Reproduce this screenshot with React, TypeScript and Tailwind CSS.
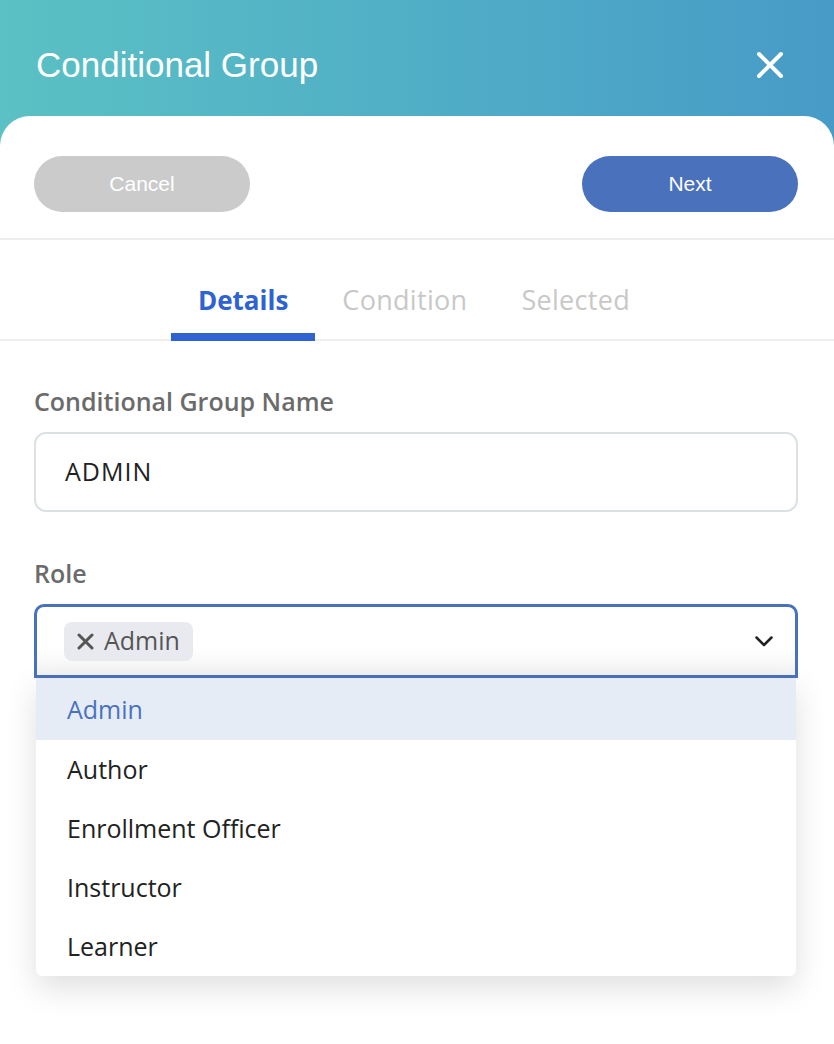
import React from 'react';

const ROLES = ['Admin', 'Author', 'Enrollment Officer', 'Instructor', 'Learner'];

export default function App() {
  const tabs = ['Details', 'Condition', 'Selected'];
  const activeTab = 'Details';

  return (
    <div className="w-[834px] h-[1044px] flex flex-col bg-gradient-to-r from-[#5bc1c4] to-[#479bc7] overflow-hidden">
      {/* Header */}
      <header className="h-[116px] shrink-0 flex items-center justify-between pl-[36px] pr-[50px] pt-[13px]">
        <h1 className="text-white text-[35px] font-['Liberation_Sans',sans-serif] leading-none">Conditional Group</h1>
        <svg width="28" height="28" viewBox="0 0 28 28" fill="none" stroke="white" strokeWidth="4" strokeLinecap="round">
          <path d="M3 3 L25 25 M25 3 L3 25" />
        </svg>
      </header>

      {/* Card */}
      <div className="flex-1 bg-white rounded-t-[30px] flex flex-col font-['Open_Sans',sans-serif]">
        {/* Actions */}
        <div className="flex justify-between pl-[34px] pr-[36px] pt-[40px] pb-[26px] border-b-2 border-[#eeeeee]">
          <button className="w-[216px] h-[56px] rounded-full bg-[#cbcbcb] text-white text-[21px] font-['Liberation_Sans',sans-serif]">
            Cancel
          </button>
          <button className="w-[216px] h-[56px] rounded-full bg-[#4a72bc] text-white text-[21px] font-['Liberation_Sans',sans-serif]">
            Next
          </button>
        </div>

        {/* Tabs */}
        <nav className="flex justify-center border-b-2 border-[#eeeeee] pr-[6px]">
          {tabs.map((tab) => {
            const isActive = tab === activeTab;
            return (
              <div key={tab} className="relative px-[27px] pt-[45px] pb-[24px]">
                <span
                  className={`block leading-[30px] ${isActive ? 'text-[26px] text-[#2e63d1] font-bold' : 'text-[27px] text-[#c8c8c8] font-normal tracking-[0.3px]'}`}
                >
                  {tab}
                </span>
                {isActive && <span className="absolute left-0 right-0 -bottom-[2px] h-[8px] bg-[#2e63d1]" />}
              </div>
            );
          })}
        </nav>

        {/* Form */}
        <div className="pl-[34px] pr-[36px] pt-[46px] flex flex-col">
          <label className="text-[25px] leading-[28px] font-semibold text-[#6b6b6b] mb-[17px]">Conditional Group Name</label>
          <div className="h-[80px] border-2 border-[#dce1e3] rounded-[12px] px-[29px] flex items-center text-[25px] tracking-[1px] text-[#222222]">
            ADMIN
          </div>

          <label className="text-[25px] leading-[28px] font-semibold text-[#6b6b6b] mt-[47px] mb-[17px]">Role</label>
          <div className="relative">
            <div className="h-[74px] border-[3px] border-[#4a72bc] rounded-t-[10px] pl-[27px] pr-[22px] flex items-center justify-between bg-gradient-to-b from-white from-60% to-[#f3f3f3]">
              <span className="h-[39px] rounded-[8px] bg-[#e9eaef] pl-[13px] pr-[13px] flex items-center gap-[10px] text-[25px] text-[#555555]">
                <svg width="17" height="17" viewBox="0 0 17 17" fill="none" stroke="#555555" strokeWidth="3" strokeLinecap="round">
                  <path d="M2 2 L15 15 M15 2 L2 15" />
                </svg>
                Admin
              </span>
              <svg width="18" height="11" viewBox="0 0 18 11" fill="none" stroke="#222222" strokeWidth="2.5" strokeLinecap="round" strokeLinejoin="round">
                <path d="M1.5 1.5 L9 9 L16.5 1.5" />
              </svg>
            </div>

            {/* Dropdown menu */}
            <ul className="absolute left-[2px] right-[2px] top-[74px] bg-white rounded-b-[6px] shadow-[0_12px_32px_rgba(0,0,0,0.13)] overflow-hidden">
              {ROLES.map((role, i) => (
                <li
                  key={role}
                  className={`flex items-center pl-[31px] text-[25px] ${i === 0 ? 'h-[62px] pt-[2px] bg-[#e6ecf6] text-[#4a72bc]' : 'h-[59px] text-[#222222]'}`}
                >
                  {role}
                </li>
              ))}
            </ul>
          </div>
        </div>
      </div>
    </div>
  );
}
